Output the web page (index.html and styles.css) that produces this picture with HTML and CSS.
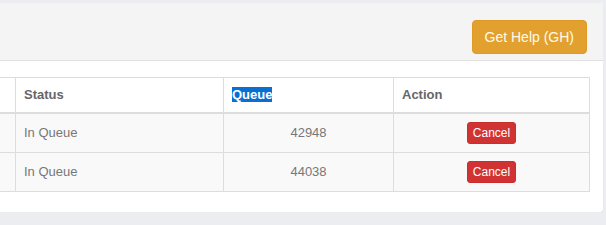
FILE: index.html
```html
<!DOCTYPE html>
<html lang="en">
<head>
    <meta charset="UTF-8">
    <meta name="viewport" content="width=device-width, initial-scale=1.0">
    <title>Queue</title>
    <link rel="stylesheet" href="styles.css">
</head>
<body>

    <div class="box">
        <div class="box-header">
            <button class="btn btn-warning">Get Help (GH)</button>
        </div>
        <div class="box-body">
            <table class="table">
                <colgroup>
                    <col class="colId">
                    <col class="colStatus">
                    <col class="colQueue">
                    <col class="colAction">
                </colgroup>
                <thead>
                    <tr>
                        <th></th>
                        <th>Status</th>
                        <th><span class="selected">Queue</span></th>
                        <th>Action</th>
                    </tr>
                </thead>
                <tbody>
                    <tr>
                        <td></td>
                        <td>In Queue</td>
                        <td class="center">42948</td>
                        <td class="center"><button class="btn btn-danger btn-xs">Cancel</button></td>
                    </tr>
                    <tr>
                        <td></td>
                        <td>In Queue</td>
                        <td class="center">44038</td>
                        <td class="center"><button class="btn btn-danger btn-xs">Cancel</button></td>
                    </tr>
                </tbody>
            </table>
        </div>
    </div>

</body>
</html>
```

FILE: styles.css
```css
body {
    margin:             0;
    background-color:   #ecedf0;
    font-family:        "Liberation Sans", Arial, sans-serif;
    font-size:          13px;
    color:              #666;
    overflow:           hidden;
}

.box {
    margin:             3px 0 0 -80px;
    width:              683px;
    background-color:   #fff;
    border-radius:      3px;
    box-shadow:         0 1px 1px rgba(0, 0, 0, 0.08);
}

.box-header {
    background-color:   #f4f4f4;
    border-bottom:      1px solid #e0e0e0;
    padding:            17px 16px 6px 0;
    display:            flex;
    justify-content:    flex-end;
    border-radius:      3px 3px 0 0;
}

.box-body {
    padding:            16px 14px 20px 15px;
}

.btn {
    font-family:        "Liberation Sans", Arial, sans-serif;
    border:             1px solid transparent;
    border-radius:      4px;
    color:              #fff;
    cursor:             pointer;
}

.btn-warning {
    background-color:   #e2a12e;
    border-color:       #dd9a26;
    color:              #fffbe8;
    font-size:          14px;
    line-height:        20px;
    padding:            6px 12px;
}

.btn-danger {
    background-color:   #d13333;
    border-color:       #c92f2f;
}

.btn-xs {
    font-size:          12px;
    line-height:        18px;
    padding:            1px 5px;
    border-radius:      3px;
}

.table {
    width:              654px;
    table-layout:       fixed;
    border-collapse:    collapse;
    border:             1px solid #ddd;
}

.colId                  { width: 80px;  }
.colStatus              { width: 208px; }
.colQueue               { width: 170px; }
.colAction              { width: 196px; }

th, td {
    border:             1px solid #ddd;
    padding:            8px;
    height:             18px;
    line-height:        18px;
    text-align:         left;
    vertical-align:     middle;
}

th {
    font-weight:        bold;
    background-color:   #fff;
    border-bottom:      2px solid #ddd;
}

tbody td                { background-color: #f9f9f9; color: #777; }

.center                 { text-align: center; }

.selected {
    background-color:   #0b6fd0;
    color:              #fff;
}
```
